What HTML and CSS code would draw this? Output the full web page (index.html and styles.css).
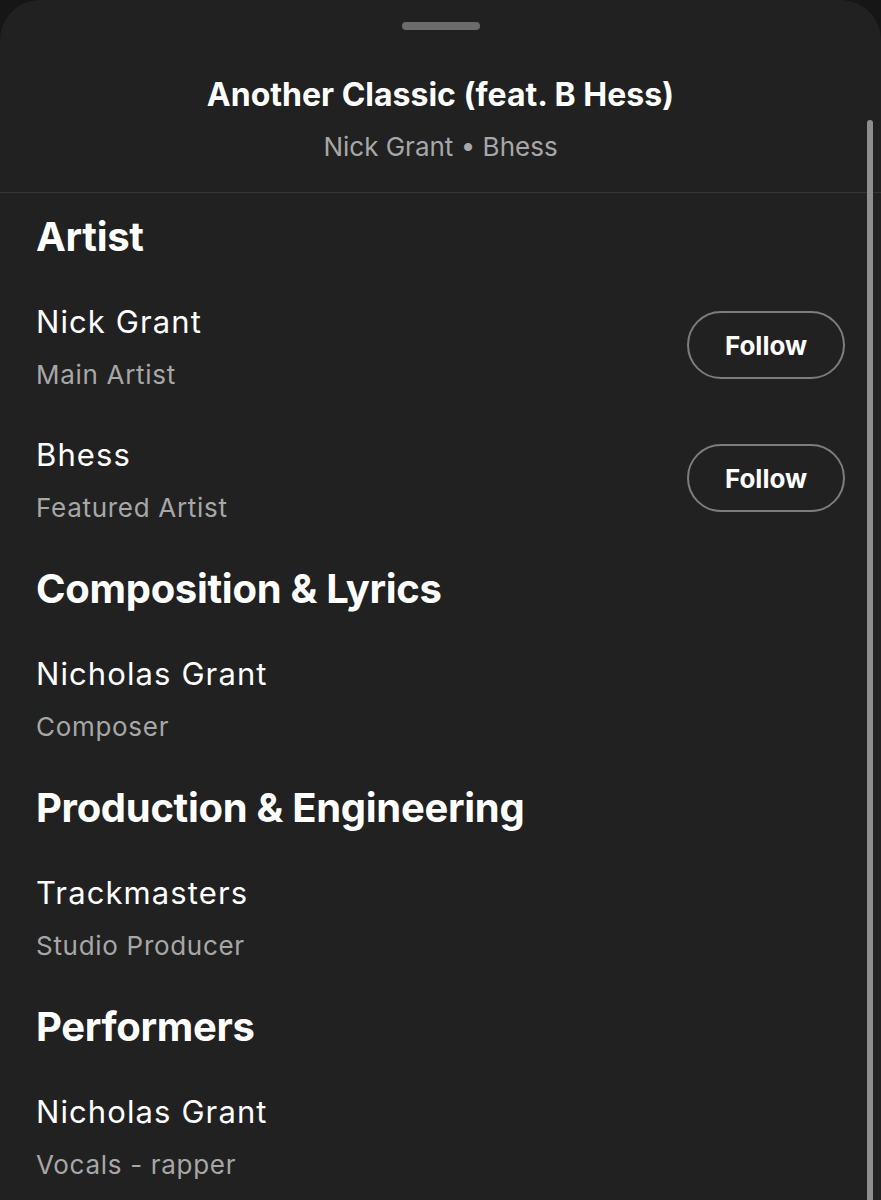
FILE: index.html
```html
<!DOCTYPE html>
<html lang="en">
<head>
  <meta charset="UTF-8" />
  <meta name="viewport" content="width=device-width, initial-scale=1.0"/>
  <title>Song Credits</title>
  <link rel="stylesheet" href="styles.css">
</head>
<body>
  <div class="sheet">
    <div class="header">
      <div class="handle"></div>
      <h1 class="title">Another Classic (feat. B Hess)</h1>
      <p class="subtitle">Nick Grant • Bhess</p>
    </div>

    <div class="credits">
      <section class="group">
        <h2>Artist</h2>
        <div class="row">
          <div class="person">
            <div class="name">Nick Grant</div>
            <div class="role">Main Artist</div>
          </div>
          <button class="follow">Follow</button>
        </div>
        <div class="row">
          <div class="person">
            <div class="name">Bhess</div>
            <div class="role">Featured Artist</div>
          </div>
          <button class="follow">Follow</button>
        </div>
      </section>

      <section class="group">
        <h2>Composition &amp; Lyrics</h2>
        <div class="row">
          <div class="person">
            <div class="name">Nicholas Grant</div>
            <div class="role">Composer</div>
          </div>
        </div>
      </section>

      <section class="group">
        <h2>Production &amp; Engineering</h2>
        <div class="row">
          <div class="person">
            <div class="name">Trackmasters</div>
            <div class="role">Studio Producer</div>
          </div>
        </div>
      </section>

      <section class="group">
        <h2>Performers</h2>
        <div class="row">
          <div class="person">
            <div class="name">Nicholas Grant</div>
            <div class="role">Vocals - rapper</div>
          </div>
        </div>
      </section>
    </div>

    <div class="scrollbar"></div>
  </div>
</body>
</html>
```

FILE: styles.css
```css
html, body {
  margin: 0;
  height: 100%;
  overflow: hidden;
}
body {
  font-family: Inter, 'Noto Sans', sans-serif;
  background-color: #161616;
  color: #ffffff;
}
.sheet {
  position: relative;
  min-height: 100%;
  background: #212121;
  border-radius: 40px 40px 0 0;
}
.header {
  display: flex;
  flex-direction: column;
  align-items: center;
  padding: 22px 0 29px;
  border-bottom: 1px solid #363636;
}
.handle {
  width: 78px;
  height: 8px;
  border-radius: 4px;
  background: #6b6b6b;
}
.title {
  margin: 45px 0 0;
  font-size: 32px;
  line-height: 40px;
  font-weight: 700;
}
.subtitle {
  margin: 16px 0 0;
  font-size: 26px;
  line-height: 32px;
  color: #a7a7a7;
}
.credits {
  display: flex;
  flex-direction: column;
  gap: 41px;
  padding: 20px 36px 0;
}
.group {
  display: flex;
  flex-direction: column;
  gap: 46px;
}
.group h2 {
  margin: 0 0 -3px;
  font-size: 40px;
  line-height: 48px;
  font-weight: 700;
  letter-spacing: -0.3px;
}
.row {
  display: flex;
  align-items: center;
  justify-content: space-between;
}
.name {
  font-size: 31px;
  line-height: 36px;
  letter-spacing: 1.1px;
}
.role {
  margin-top: 19px;
  font-size: 26px;
  line-height: 32px;
  letter-spacing: 0.7px;
  color: #a7a7a7;
}
.follow {
  width: 158px;
  height: 68px;
  margin-top: -5px;
  border: 2px solid #7d7d7d;
  border-radius: 34px;
  background: transparent;
  color: #ffffff;
  font-family: inherit;
  font-size: 26px;
  font-weight: 700;
  cursor: pointer;
}
.scrollbar {
  position: absolute;
  top: 120px;
  right: 8px;
  width: 6px;
  height: 1100px;
  border-radius: 3px;
  background: #8e8e8e;
}
```
